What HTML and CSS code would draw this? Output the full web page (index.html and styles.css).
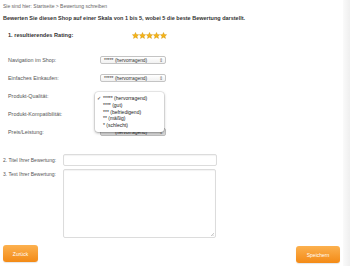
FILE: index.html
```html
<!DOCTYPE html>
<html lang="de">
<head>
<meta charset="utf-8">
<title>Bewertung schreiben</title>
<link rel="stylesheet" href="styles.css">
</head>
<body>
<div class="main">
  <div class="crumb">Sie sind hier: Startseite &gt; Bewertung schreiben</div>
  <div class="heading">Bewerten Sie diesen Shop auf einer Skala von 1 bis 5, wobei 5 die beste Bewertung darstellt.</div>
  <div class="rating">
    <span class="rating-label">1. resultierendes Rating:</span>
    <span class="stars">
      <svg viewBox="0 0 10 10"><path d="M5 .6 6.3 3.6 9.5 3.8 7.1 5.9 7.9 9.2 5 7.5 2.1 9.2 2.9 5.9.5 3.8 3.7 3.6Z"/></svg>
      <svg viewBox="0 0 10 10"><path d="M5 .6 6.3 3.6 9.5 3.8 7.1 5.9 7.9 9.2 5 7.5 2.1 9.2 2.9 5.9.5 3.8 3.7 3.6Z"/></svg>
      <svg viewBox="0 0 10 10"><path d="M5 .6 6.3 3.6 9.5 3.8 7.1 5.9 7.9 9.2 5 7.5 2.1 9.2 2.9 5.9.5 3.8 3.7 3.6Z"/></svg>
      <svg viewBox="0 0 10 10"><path d="M5 .6 6.3 3.6 9.5 3.8 7.1 5.9 7.9 9.2 5 7.5 2.1 9.2 2.9 5.9.5 3.8 3.7 3.6Z"/></svg>
      <svg viewBox="0 0 10 10"><path d="M5 .6 6.3 3.6 9.5 3.8 7.1 5.9 7.9 9.2 5 7.5 2.1 9.2 2.9 5.9.5 3.8 3.7 3.6Z"/></svg>
    </span>
  </div>
  <div class="ratings">
    <div class="row"><span class="label">Navigation im Shop:</span><div class="select"><span>***** (hervorragend)</span><span class="arrow">&#8661;</span></div></div>
    <div class="row"><span class="label">Einfaches Einkaufen:</span><div class="select"><span>***** (hervorragend)</span><span class="arrow">&#8661;</span></div></div>
    <div class="row"><span class="label">Produkt-Qualität:</span><div class="select covered"><span>***** (hervorragend)</span><span class="arrow">&#8661;</span></div></div>
    <div class="row"><span class="label">Produkt-Kompatibilität:</span><div class="select covered"><span>***** (hervorragend)</span><span class="arrow">&#8661;</span></div></div>
    <div class="row"><span class="label">Preis/Leistung:</span><div class="select active"><span>***** (hervorragend)</span><span class="arrow">&#8661;</span></div></div>
    <ul class="popup">
      <li><span class="check">&#10003;</span>***** (hervorragend)</li>
      <li><span class="check"></span>**** (gut)</li>
      <li><span class="check"></span>*** (befriedigend)</li>
      <li><span class="check"></span>** (mäßig)</li>
      <li><span class="check"></span>* (schlecht)</li>
    </ul>
  </div>
  <div class="fields">
    <div class="field"><label class="flabel">2. Titel Ihrer Bewertung:</label><div class="input"></div></div>
    <div class="field"><label class="flabel tl">3. Text Ihrer Bewertung:</label><div class="textarea"><svg class="grip" viewBox="0 0 4 4"><path d="M1 4 4 1M2.5 4 4 2.5" stroke="#999" stroke-width=".5"/></svg></div></div>
  </div>
  <div class="buttons">
    <button class="btn back">Zurück</button>
    <button class="btn save">Speichern</button>
  </div>
</div>
<div class="edge"></div>
</body>
</html>
```
FILE: styles.css
```css
html, body { margin: 0; padding: 0; background: #fff; }
body {
  display: flex;
  height: 266px;
  overflow: hidden;
  font-family: "Liberation Sans", Arial, sans-serif;
  color: #444;
}
.main { flex: 1; position: relative; }
.edge { width: 7px; background: linear-gradient(to right, #fafafa, #efefef); }

.crumb {
  height: 12px; line-height: 12px;
  padding-left: 3px;
  font-size: 5px; color: #666;
}
.heading {
  height: 12px; line-height: 12px;
  padding-left: 3px;
  font-size: 5.5px; font-weight: bold; color: #333;
}
.rating {
  height: 22px;
  display: flex; align-items: center;
  padding-left: 8px;
}
.rating-label { width: 124px; font-size: 5.6px; font-weight: bold; color: #333; }
.stars { display: flex; }
.stars svg { width: 7px; height: 7px; }
.stars path { fill: #f6b417; stroke: #c98a00; stroke-width: .5; }

.ratings { position: relative; margin-top: 5px; }
.row {
  height: 18px;
  display: flex; align-items: center;
  padding-left: 8px;
}
.label { width: 92px; font-size: 5.4px; color: #555; }
.select {
  height: 6px;
  border: 1px solid #c4c4c4; border-radius: 2px;
  background: linear-gradient(#fff, #f1f1f1);
  display: flex; align-items: center; justify-content: space-between;
  padding: 0 2px 0 3px;
  font-size: 4.9px; color: #333;
  box-sizing: content-box;
  width: 59px;
}
.select.covered { visibility: hidden; }
.select.active { background: #d9d9d9; border-color: #bdbdbd; }
.arrow { font-size: 4.6px; color: #777; }

.popup {
  position: absolute; left: 95px; top: 41px;
  width: 69px; height: 40px;
  margin: 0; padding: 3px 0 0;
  box-sizing: border-box;
  list-style: none;
  background: #fff;
  border-radius: 3px;
  box-shadow: 0 1px 3px rgba(0,0,0,.35), 0 0 0 .5px rgba(0,0,0,.12);
}
.popup li {
  height: 6.8px; line-height: 6.8px;
  font-size: 5px; color: #222;
  display: flex;
}
.check { width: 8px; text-align: center; font-size: 5px; }

.fields { margin-top: 13px; display: flex; flex-direction: column; gap: 3px; }
.field { display: flex; align-items: center; padding-left: 3px; }
.flabel { width: 60px; font-size: 5px; color: #555; }
.flabel.tl { align-self: flex-start; padding-top: 2px; }
.input {
  width: 152px; height: 10px;
  border: 1px solid #dcdcdc; border-radius: 2px;
  box-shadow: inset 0 1px 1px rgba(0,0,0,.05);
}
.textarea {
  position: relative;
  width: 151px; height: 67px;
  border: 1px solid #dcdcdc; border-radius: 2px;
  box-shadow: inset 0 1px 1px rgba(0,0,0,.05);
}
.grip { position: absolute; right: 1px; bottom: 1px; width: 4px; height: 4px; }

.buttons {
  margin-top: 7px;
  display: flex; justify-content: space-between;
  padding: 0 3px;
}
.btn {
  height: 17px;
  border: none; border-radius: 3px;
  background: linear-gradient(#fcb14f, #f38a16);
  color: #fff;
  font-family: "Liberation Sans", Arial, sans-serif;
  font-size: 5px;
  padding: 0;
  box-shadow: 0 1px 1px rgba(0,0,0,.1);
}
.back { width: 35px; }
.save { width: 44px; margin-top: 1px; }
```
